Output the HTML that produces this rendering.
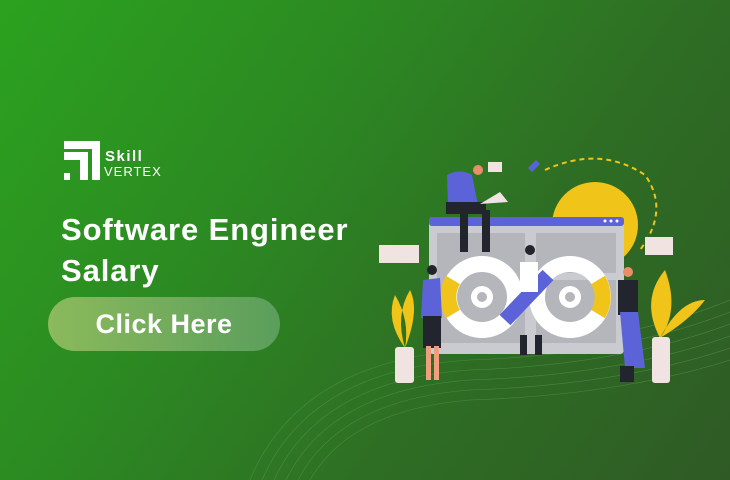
<!DOCTYPE html><html><head><style>
body{margin:0;width:730px;height:480px;overflow:hidden;font-family:"Liberation Sans",sans-serif}
.bg{position:absolute;inset:0;background:linear-gradient(125deg,#2ba21f 0%,#2c8a22 35%,#2e6e24 65%,#2f5a25 100%)}
.t{position:absolute;color:#fff;font-weight:bold}
</style></head><body><div class="bg"></div>
<svg style="position:absolute;left:0;top:0" width="730" height="480">
<g fill="none" stroke="#5f9a55" stroke-width="0.6" opacity="0.6">
<path d="M250 480 Q300 360 470 350 Q620 345 730 300"/><path d="M262 480 Q310 370 470 360 Q620 355 730 312"/><path d="M274 480 Q320 380 470 370 Q620 365 730 324"/><path d="M286 480 Q330 390 470 380 Q620 375 730 336"/><path d="M298 480 Q340 400 470 390 Q620 385 730 348"/><path d="M310 480 Q350 410 470 400 Q620 395 730 360"/>
</g>
<g fill="#fff"><path d="M64 141h36v39h-8v-31h-28z"/><path d="M64 152h24v28h-8v-20h-16z"/><rect x="64" y="173" width="6" height="7"/></g>
<circle cx="595" cy="225" r="43" fill="#f0c419"/>
<path d="M545 170 Q600 145 645 175 Q670 210 640 250" fill="none" stroke="#f0c419" stroke-width="2" stroke-dasharray="5 4"/>
<rect x="429" y="217" width="195" height="137" rx="4" fill="#c9cbd0"/>
<rect x="429" y="217" width="195" height="9" rx="3" fill="#5c63d8"/>
<circle cx="605" cy="221" r="1.5" fill="#fff"/><circle cx="611" cy="221" r="1.5" fill="#fff"/><circle cx="617" cy="221" r="1.5" fill="#fff"/>
<rect x="437" y="233" width="88" height="110" fill="#b4b6bb"/><rect x="536" y="233" width="80" height="40" fill="#b4b6bb"/><rect x="536" y="280" width="80" height="63" fill="#b4b6bb"/>
<circle cx="482" cy="297" r="33" fill="none" stroke="#fff" stroke-width="16"/>
<circle cx="570" cy="297" r="33" fill="none" stroke="#fff" stroke-width="16"/>
<path d="M453 280 A33 33 0 0 0 453 314" fill="none" stroke="#f0c419" stroke-width="16"/>
<path d="M598 280 A33 33 0 0 1 598 314" fill="none" stroke="#f0c419" stroke-width="16"/>
<path d="M505 320 L548 275" stroke="#5c63d8" stroke-width="15"/>
<circle cx="482" cy="297" r="11" fill="#fff"/><circle cx="482" cy="297" r="5" fill="#b4b6bb"/>
<circle cx="570" cy="297" r="11" fill="#fff"/><circle cx="570" cy="297" r="5" fill="#b4b6bb"/>
<path d="M405 348 Q385 320 395 295 Q410 320 405 348 Q420 310 410 290 Q395 315 405 348" fill="#f0c419"/>
<path d="M660 338 Q640 300 665 270 Q680 310 660 338 Q690 320 705 300 Q680 300 660 338" fill="#f0c419"/>
<rect x="395" y="347" width="19" height="36" rx="3" fill="#f2e3e3"/>
<rect x="652" y="337" width="18" height="46" rx="3" fill="#f2e3e3"/>
<path d="M447 175 Q460 168 472 175 L478 205 L448 205Z" fill="#5c63d8"/><circle cx="478" cy="170" r="5" fill="#e98d6b"/>
<rect x="446" y="202" width="40" height="12" fill="#22252e"/><rect x="460" y="210" width="8" height="42" fill="#22252e"/><rect x="482" y="210" width="8" height="42" fill="#22252e"/>
<path d="M480 204 L500 192 L508 202 Z" fill="#f2e3e3"/>
<rect x="488" y="162" width="14" height="10" fill="#f2e3e3"/>
<path d="M528 168 l8 -8 l4 4 l-8 8 z" fill="#5c63d8"/>
<rect x="520" y="262" width="18" height="30" fill="#fff"/><circle cx="530" cy="250" r="5" fill="#22252e"/>
<rect x="520" y="335" width="7" height="20" fill="#22252e"/><rect x="535" y="335" width="7" height="20" fill="#22252e"/>
<path d="M423 280 L440 278 L442 318 L421 318Z" fill="#5c63d8"/><circle cx="432" cy="270" r="5" fill="#22252e"/>
<rect x="423" y="316" width="18" height="32" fill="#22252e"/><rect x="426" y="346" width="5" height="34" fill="#f09e7e"/><rect x="434" y="346" width="5" height="34" fill="#f09e7e"/>
<rect x="618" y="280" width="20" height="35" fill="#22252e"/><circle cx="628" cy="272" r="5" fill="#e98d6b"/>
<path d="M620 312 L638 312 L645 368 L625 368Z" fill="#5c63d8"/><rect x="620" y="366" width="14" height="16" fill="#22252e"/>
<rect x="379" y="245" width="40" height="18" fill="#f2e3e3"/><rect x="645" y="237" width="28" height="18" fill="#f2e3e3"/>
</svg>
<div class="t" style="left:105px;top:148px;font-size:15px;letter-spacing:1.5px">Skill</div>
<div class="t" style="left:104px;top:164px;font-size:13px;font-weight:normal;letter-spacing:1px">VERTEX</div>
<div class="t" style="left:61px;top:209px;font-size:31px;line-height:41px;letter-spacing:0.9px">Software Engineer<br>Salary</div>
<div style="position:absolute;left:48px;top:297px;width:232px;height:54px;border-radius:27px;background:linear-gradient(90deg,#8cba5c,#5a9e5c);color:#fff;font-weight:bold;font-size:27px;line-height:54px;text-align:center;letter-spacing:0.5px">Click Here</div>
</body></html>
